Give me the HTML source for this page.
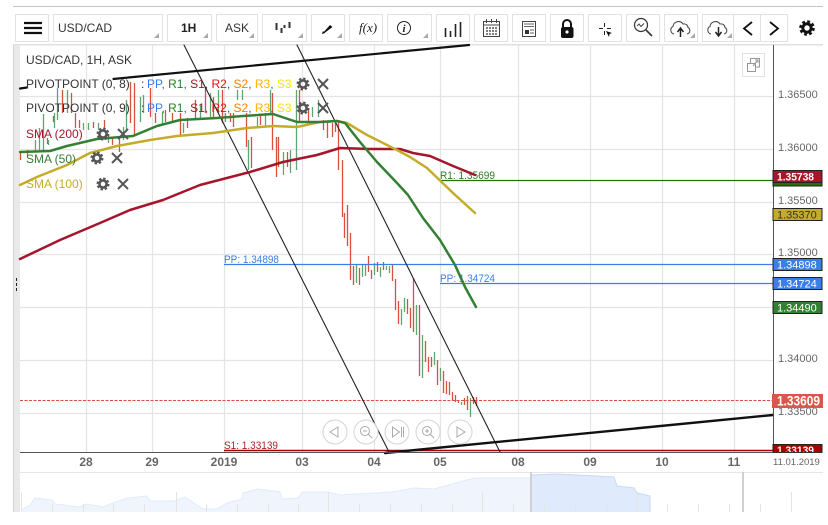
<!DOCTYPE html>
<html><head><meta charset="utf-8"><style>
html,body{margin:0;padding:0;background:#fff}
svg{display:block;font-family:"Liberation Sans",sans-serif}
</style></head><body>
<svg width="828" height="525" viewBox="0 0 828 525" xmlns="http://www.w3.org/2000/svg">
<defs>
<g id="gear"><circle r="3.6" fill="none" stroke="#555" stroke-width="2.6"/><circle r="5.4" fill="none" stroke="#555" stroke-width="2.2" stroke-dasharray="2.4 1.84"/></g>
<path id="cross" d="M-5-5L5 5M-5 5L5-5" stroke="#555" stroke-width="2" fill="none"/>
<path id="tri" d="M0 0h-5l5-5z" fill="#aaa"/>
</defs>
<rect width="828" height="525" fill="#fff"/>
<rect x="13" y="6" width="810" height="1" fill="#c4c4c4"/>

<!-- toolbar buttons -->
<g fill="#fff" stroke="#e2e2e2" stroke-width="1">
<rect x="15.500" y="14.500" width="33" height="27"/><rect x="53.500" y="14.500" width="109" height="27"/><rect x="167.500" y="14.500" width="44" height="27"/><rect x="216.500" y="14.500" width="41" height="27"/><rect x="262.500" y="14.500" width="44" height="27"/><rect x="311.500" y="14.500" width="33" height="27"/><rect x="349.500" y="14.500" width="33" height="27"/><rect x="387.500" y="14.500" width="44" height="27"/><rect x="436.500" y="14.500" width="33" height="27"/><rect x="474.500" y="14.500" width="33" height="27"/><rect x="512.500" y="14.500" width="33" height="27"/><rect x="550.500" y="14.500" width="33" height="27"/><rect x="588.500" y="14.500" width="33" height="27"/><rect x="626.500" y="14.500" width="33" height="27"/><rect x="664.500" y="14.500" width="33" height="27"/><rect x="702.500" y="14.500" width="33" height="27"/><rect x="733.500" y="14.500" width="27" height="27"/><rect x="760.500" y="14.500" width="27" height="27"/>
</g>
<g>
<use href="#tri" x="159" y="38"/><use href="#tri" x="208" y="38"/><use href="#tri" x="254" y="38"/><use href="#tri" x="303" y="38"/><use href="#tri" x="342" y="38"/><use href="#tri" x="428" y="38"/><use href="#tri" x="695" y="38"/><use href="#tri" x="732" y="38"/>
</g>
<path d="M24 23h18M24 28h18M24 33h18" stroke="#111" stroke-width="2.200"/>
<text x="58" y="32" font-size="12" fill="#333">USD/CAD</text>
<text x="181" y="32" font-size="12" font-weight="bold" fill="#222">1H</text>
<text x="225" y="32" font-size="12" fill="#333">ASK</text>
<path d="M276.500 23v7M281.500 28v5M284.500 25v3M289.500 22v6" stroke="#333" stroke-width="2"/>
<path d="M322 34l8-9 2.500 2-8 6z" fill="#111"/><path d="M322 34l1-3 2 2z" fill="#111"/>
<text x="359" y="32" font-size="13" font-family="Liberation Serif" font-style="italic" fill="#222">f(x)</text>
<circle cx="404" cy="28" r="6.500" fill="none" stroke="#222" stroke-width="1"/><text x="402.500" y="32" font-size="11" font-family="Liberation Serif" font-style="italic" font-weight="bold" fill="#222">i</text>
<path d="M445.500 28v9M450.500 31v6M455.500 24v13M460.500 22v15" stroke="#222" stroke-width="1.600"/>
<rect x="483.500" y="21.500" width="16" height="15" fill="none" stroke="#444"/><path d="M483 25h17" stroke="#444"/><path d="M486.500 19v4M491.500 19v4M496.500 19v4" stroke="#444"/><path d="M486 28h11M486 31h11M486 34h11" stroke="#555" stroke-dasharray="2 1" stroke-width="1.500"/>
<rect x="522.500" y="21.500" width="13" height="15" fill="none" stroke="#444"/><path d="M524 24h10M524 26.500h10" stroke="#666"/><rect x="525" y="30" width="4" height="4" fill="#333"/><path d="M530 30h4M530 33h4" stroke="#666"/>
<path d="M563 27v-3a4 4 0 0 1 8 0v3" fill="none" stroke="#111" stroke-width="2"/><rect x="561" y="27" width="12.500" height="11" rx="2" fill="#111"/><circle cx="567" cy="32" r="1.600" fill="#fff"/>
<path d="M604.500 23v4M604.500 31v4M599 28.500h4M607 28.500h4" stroke="#222"/><path d="M606 31l6 2-2.500 1 -.5 3z" fill="#111"/>
<circle cx="641" cy="25" r="6.500" fill="none" stroke="#333" stroke-width="1.200"/><path d="M646 30l6 6" stroke="#333" stroke-width="1.600"/><path d="M637 26l2-2 2 2.500 3-3" fill="none" stroke="#444"/>
<path d="M674 34a4 4 0 0 1-1-7.500 5.500 5.500 0 0 1 10-2.500 4 4 0 0 1 5 3.500 3.500 3.500 0 0 1-1 6.500" fill="none" stroke="#444"/>
<path d="M680.500 37v-8M677.500 32l3-4 3 4" fill="none" stroke="#222" stroke-width="1.500"/>
<path d="M711 34a4 4 0 0 1-1-7.500 5.500 5.500 0 0 1 10-2.500 4 4 0 0 1 5 3.500 3.500 3.500 0 0 1-1 6.500" fill="none" stroke="#444"/>
<path d="M718.500 27v8M715.500 32l3 4 3-4" fill="none" stroke="#222" stroke-width="1.500"/>
<path d="M752 22l-8 6.500 8 6.500" fill="none" stroke="#111" stroke-width="1.800"/>
<path d="M770 22l8 6.500-8 6.500" fill="none" stroke="#111" stroke-width="1.800"/>
<g transform="translate(807,28)"><circle r="4.200" fill="none" stroke="#111" stroke-width="3"/><circle r="6.600" fill="none" stroke="#111" stroke-width="2.400" stroke-dasharray="2.900 2.280"/></g>

<!-- chart frame -->
<rect x="13" y="44" width="810" height="1.500" fill="#e0e0e0"/>
<rect x="13" y="45" width="7" height="467" fill="#e9e9e9"/>
<rect x="13" y="45" width="1" height="467" fill="#d4d4d4"/>
<path d="M16.500 278v3M16.500 283v3M16.500 288v3" stroke="#222"/>

<!-- grid -->
<g stroke="#e4e4e4" stroke-width="1.200">
<path d="M20 96.500H773M20 149.500H773M20 202.500H773M20 254.500H773M20 307.500H773M20 360.500H773M20 413.500H773"/>
<path d="M86.500 45V452M152.500 45V452M224.500 45V452M302.500 45V452M374.500 45V452M440.500 45V452M518.500 45V452M590.500 45V452M662.500 45V452M734.500 45V452"/>
</g>

<!-- candles -->
<path stroke="#d9503f" stroke-width="1.300" fill="none" d="M20.500 153V160M27.500 150V156M47.500 138V144M53.500 116V122M62.500 90V113M71.500 93V113M75.500 113V128M79.500 120V128M93.500 122V128M104.500 120V130M112.500 138V145M119.500 137V152M130.500 82V123M134.500 83V135M150.500 88V117M155.500 113V123M165.500 110V122M172.500 113V123M180.500 113V135M187.500 118V128M195.500 100V118M205.500 87V113M213.500 97V117M222.500 90V123M230.500 113V122M233.500 113V127M246.500 113V147M251.500 137V168M260.500 115V125M272.500 93V150M276.500 137V177M278.500 137V167M287.500 152V167M299.500 90V123M308.500 110V122M323.500 120V130M327.500 122V138M332.500 123V137M335.500 122V132M338.500 122V170M342.500 160V217M344.500 213V238M347.500 205V246M350.500 233V280M353.500 266V285M359.500 268V285M368.500 256V272M371.500 270V279M377.500 262V272M383.500 262V270M392.500 265V281M395.500 279V310M398.500 301V324M407.500 299V314M410.500 308V328M413.500 278V332M419.500 305V376M425.500 341V362M428.500 357V372M431.500 357V367M437.500 360V385M443.500 371V393M446.500 381V394M449.500 382V395M452.500 392V401M455.500 395V402M458.500 400V403M464.500 398V405M467.500 396V410M473.500 397V404M476.500 397V406"/>
<path stroke="#5fa573" stroke-width="1.300" fill="none" d="M35.500 140V152M39.500 128V150M43.500 114V150M48.500 140V145M54.500 113V128M57.500 88V120M67.500 90V113M83.500 123V130M88.500 123V130M98.500 123V130M108.500 135V143M123.500 127V140M126.500 100V130M140.500 97V122M143.500 95V113M162.500 112V125M183.500 123V133M200.500 105V118M210.500 93V117M218.500 90V113M225.500 113V122M237.500 90V100M242.500 90V100M248.500 140V170M257.500 117V127M265.500 113V127M270.500 90V113M283.500 152V175M290.500 150V173M296.500 90V170M312.500 107V117M318.500 100V117M356.500 265V283M362.500 265V277M365.500 265V276M374.500 263V275M380.500 267V277M386.500 266V270M389.500 266V273M401.500 309V325M404.500 298V312M416.500 305V335M422.500 335V378M434.500 352V365M440.500 368V381M461.500 402V405M470.500 398V417"/>

<!-- pivot lines -->
<path d="M440 180.500H773" stroke="#2a7000" stroke-width="1.200"/>
<text x="440" y="179" font-size="11" fill="#2a7d2a" textLength="55" lengthAdjust="spacingAndGlyphs">R1: 1.35699</text>
<path d="M224 264.500H773" stroke="#3a7fe8" stroke-width="1.200"/>
<text x="224" y="263" font-size="11" fill="#3a7fe8" textLength="55" lengthAdjust="spacingAndGlyphs">PP: 1.34898</text>
<path d="M440 283.500H773" stroke="#3a7fe8" stroke-width="1.200"/>
<text x="440" y="282" font-size="11" fill="#3a7fe8" textLength="55" lengthAdjust="spacingAndGlyphs">PP: 1.34724</text>
<path d="M224 450.500H773" stroke="#a80000" stroke-width="1.400"/>
<text x="224" y="449" font-size="11" fill="#b0202a" textLength="54" lengthAdjust="spacingAndGlyphs">S1: 1.33139</text>
<path d="M20 400.500H773" stroke="#d9503f" stroke-width="1.100" stroke-dasharray="3 1.500"/>

<!-- channels and trend -->
<g fill="none" stroke-linejoin="round" stroke-linecap="round">
<path d="M184 45L389 452M297 45L500 452" stroke="#222" stroke-width="1.100"/>
<path d="M20 88.500L27 87.500M113 79L469 45" stroke="#111" stroke-width="2.200"/>
<path d="M385 453L773 415" stroke="#111" stroke-width="2.400"/>
<!-- SMAs -->
<path stroke="#a5152b" stroke-width="2.500" d="M20 259L60 240L100 223L130 210L163 200L200 185L250 172L283 162L317 155L340 148L370 149L400 149L413 153L430 156L453 166L475 175"/>
<path stroke="#c4ac2a" stroke-width="2.500" d="M20 185L37 177L67 165L90 153L117 146L150 140L177 136L213 133L247 128L273 126L297 127L320 122L337 121L347 123L367 135L397 150L410 157L427 168L453 193L475 213"/>
<path stroke="#338033" stroke-width="2.500" d="M20 152L50 151L67 146L97 139L133 136L157 126L180 120L217 118L243 116L273 114L297 122L320 122L337 121L345 123L360 142L377 162L397 183L408 195L423 218L440 240L455 265L465 287L476 307"/>
</g>

<!-- axes -->
<path d="M773.500 45V452" stroke="#555" stroke-width="1"/>
<path d="M20 472.500H823" stroke="#e6e6e6" stroke-width="1"/>

<g font-size="11" fill="#666">
<text x="778" y="98">1.36500</text><text x="778" y="151">1.36000</text><text x="778" y="204">1.35500</text><text x="778" y="256">1.35000</text><text x="778" y="362">1.34000</text><text x="778" y="415">1.33500</text>
</g>
<g font-size="11">
<rect x="773" y="174" width="49" height="12" fill="#2a7000" stroke="#222"/>
<rect x="773" y="170.500" width="49" height="12" fill="#a5152b" stroke="#222"/>
<text x="777" y="180.500" fill="#fff" font-weight="bold" textLength="37" lengthAdjust="spacingAndGlyphs">1.35738</text>
<rect x="773" y="208.500" width="49" height="12" fill="#c4ac2a" stroke="#222"/>
<text x="777" y="218.500" fill="#333">1.35370</text>
<rect x="773" y="258.500" width="49" height="12" fill="#3a7fe8" stroke="#222"/>
<text x="777" y="268.500" fill="#fff">1.34898</text>
<rect x="773" y="277.500" width="49" height="12" fill="#3a7fe8" stroke="#222"/>
<text x="777" y="287.500" fill="#fff">1.34724</text>
<rect x="773" y="301.500" width="49" height="12" fill="#338033" stroke="#222"/>
<text x="777" y="311.500" fill="#fff">1.34490</text>
<rect x="772" y="394" width="51" height="14" fill="#d9574a"/>
<text x="777" y="405.500" fill="#fff" font-size="13.500" font-weight="bold" textLength="43" lengthAdjust="spacingAndGlyphs">1.33609</text>
<rect x="773" y="444.500" width="49" height="8" fill="#a80000" stroke="#222"/>
<text x="777" y="454" fill="#fff" font-weight="bold" textLength="37" lengthAdjust="spacingAndGlyphs">1.33139</text>
</g>
<rect x="770" y="453" width="58" height="19" fill="#fff"/>
<path d="M20 452.500H773" stroke="#555" stroke-width="1"/>
<rect x="773" y="452" width="49" height="1" fill="#333"/>

<!-- legend -->
<path d="M27 87.500L113 79" stroke="#fff" stroke-width="1"/>
<g font-size="12">
<text x="26" y="64" fill="#333">USD/CAD, 1H, ASK</text>
<text x="26" y="88" fill="#333">PIVOTPOINT (0, 8)</text>
<text x="26" y="112" fill="#333">PIVOTPOINT (0, 9)</text>
<text x="141" y="88" fill="#333">:</text>
<text x="141" y="112" fill="#333">:</text>
<text x="147" y="88"><tspan fill="#3a7fe8">PP</tspan><tspan fill="#555">, </tspan><tspan fill="#2a7d2a">R1</tspan><tspan fill="#555">, </tspan><tspan fill="#a5152b">S1</tspan><tspan fill="#555">, </tspan><tspan fill="#e81010">R2</tspan><tspan fill="#555">, </tspan><tspan fill="#ff7f00">S2</tspan><tspan fill="#555">, </tspan><tspan fill="#ffb300">R3</tspan><tspan fill="#555">, </tspan><tspan fill="#f5e800">S3</tspan></text>
<text x="147" y="112"><tspan fill="#3a7fe8">PP</tspan><tspan fill="#555">, </tspan><tspan fill="#2a7d2a">R1</tspan><tspan fill="#555">, </tspan><tspan fill="#a5152b">S1</tspan><tspan fill="#555">, </tspan><tspan fill="#e81010">R2</tspan><tspan fill="#555">, </tspan><tspan fill="#ff7f00">S2</tspan><tspan fill="#555">, </tspan><tspan fill="#ffb300">R3</tspan><tspan fill="#555">, </tspan><tspan fill="#f5e800">S3</tspan></text>
<text x="26" y="138" fill="#a5152b">SMA (200)</text>
<text x="26" y="163" fill="#338033">SMA (50)</text>
<text x="26" y="188" fill="#c4ac2a">SMA (100)</text>
</g>
<use href="#gear" x="303" y="84"/><use href="#cross" x="323" y="84"/>
<use href="#gear" x="303" y="108"/><use href="#cross" x="323" y="108"/>
<use href="#gear" x="103" y="134"/><use href="#cross" x="123" y="134"/>
<use href="#gear" x="97" y="158"/><use href="#cross" x="117" y="158"/>
<use href="#gear" x="103" y="184"/><use href="#cross" x="123" y="184"/>

<!-- popout -->
<rect x="742.500" y="53.500" width="22" height="23" fill="#fff" stroke="#e2e2e2"/>
<g fill="none" stroke="#999"><rect x="747.500" y="63.500" width="8" height="8"/><path d="M750.500 63v-4.500h9v8.500h-4"/><path d="M753 66l5-6M755 60h3v3"/></g>

<!-- nav circles -->
<g fill="#fff" fill-opacity=".75" stroke="#d4d4d4">
<circle cx="335" cy="432" r="12"/><circle cx="366" cy="432" r="12"/><circle cx="397" cy="432" r="12"/><circle cx="428" cy="432" r="12"/><circle cx="460" cy="432" r="12"/>
</g>
<g fill="none" stroke="#aaa">
<path d="M338 427v10l-8-5z"/>
<circle cx="365" cy="431" r="4.500"/><path d="M368 434l4 4M363 431h4"/>
<path d="M392.500 427v10l7-5zM401.500 427v10M403.500 427v10"/>
<circle cx="427" cy="431" r="4.500"/><path d="M430 434l4 4M425 431h4M427 429v4"/>
<path d="M457 427v10l8-5z"/>
</g>

<!-- date labels -->
<g font-size="12" font-weight="bold" fill="#666" text-anchor="middle">
<text x="86" y="466">28</text><text x="152" y="466">29</text><text x="224" y="466">2019</text><text x="302" y="466">03</text><text x="374" y="466">04</text><text x="440" y="466">05</text><text x="518" y="466">08</text><text x="590" y="466">09</text><text x="662" y="466">10</text><text x="734" y="466">11</text>
</g>
<text x="773" y="465" font-size="9.500" fill="#666">11.01.2019</text>

<!-- overview -->
<path d="M21 512V510L30 505L35 498L52 500L55 504L80 507L87 504L103 507L113 503L128 498L147 496L150 501L175 501L185 497L203 509L217 509L227 503L242 499L243 493L258 489L280 492L282 499L298 498L302 492L328 492L340 495L393 492L414 488L434 489L474 478L531 478V512Z" fill="#f0f5fd" stroke="none"/>
<path d="M21 510L30 505L35 498L52 500L55 504L80 507L87 504L103 507L113 503L128 498L147 496L150 501L175 501L185 497L203 509L217 509L227 503L242 499L243 493L258 489L280 492L282 499L298 498L302 492L328 492L340 495L393 492L414 488L434 489L474 478L531 478" fill="none" stroke="#e0ebfb"/>
<path d="M531 512V478L532 475L557 474L614 477L617 486L634 488L637 493L650 496V512Z" fill="#dfeafc" stroke="none"/>
<path d="M531 478L532 475L557 474L614 477L617 486L634 488L637 493L650 496V512" fill="none" stroke="#c4daf8"/>
<path stroke="#e4e4e4" stroke-width="1" d="M52.500 504V512M83.500 504V512M113.500 504V512M144.500 504V512M206.500 504V512M237.500 504V512M268.500 504V512M298.500 504V512M359.500 504V512M390.500 504V512M421.500 504V512M452.500 504V512M513.500 504V512M544.500 504V512M575.500 504V512M606.500 504V512M667.500 504V512M698.500 504V512M729.500 504V512M760.500 504V512M176.500 492V512M328.500 492V512M482.500 492V512M637.500 492V512M791.500 492V512M21.500 492V512"/>
<rect x="530" y="472" width="2" height="40" fill="#d0d0d0"/>
<rect x="742" y="472" width="2" height="40" fill="#d0d0d0"/>
<rect x="13" y="512" width="815" height="13" fill="#fff"/>
</svg>
</body></html>
